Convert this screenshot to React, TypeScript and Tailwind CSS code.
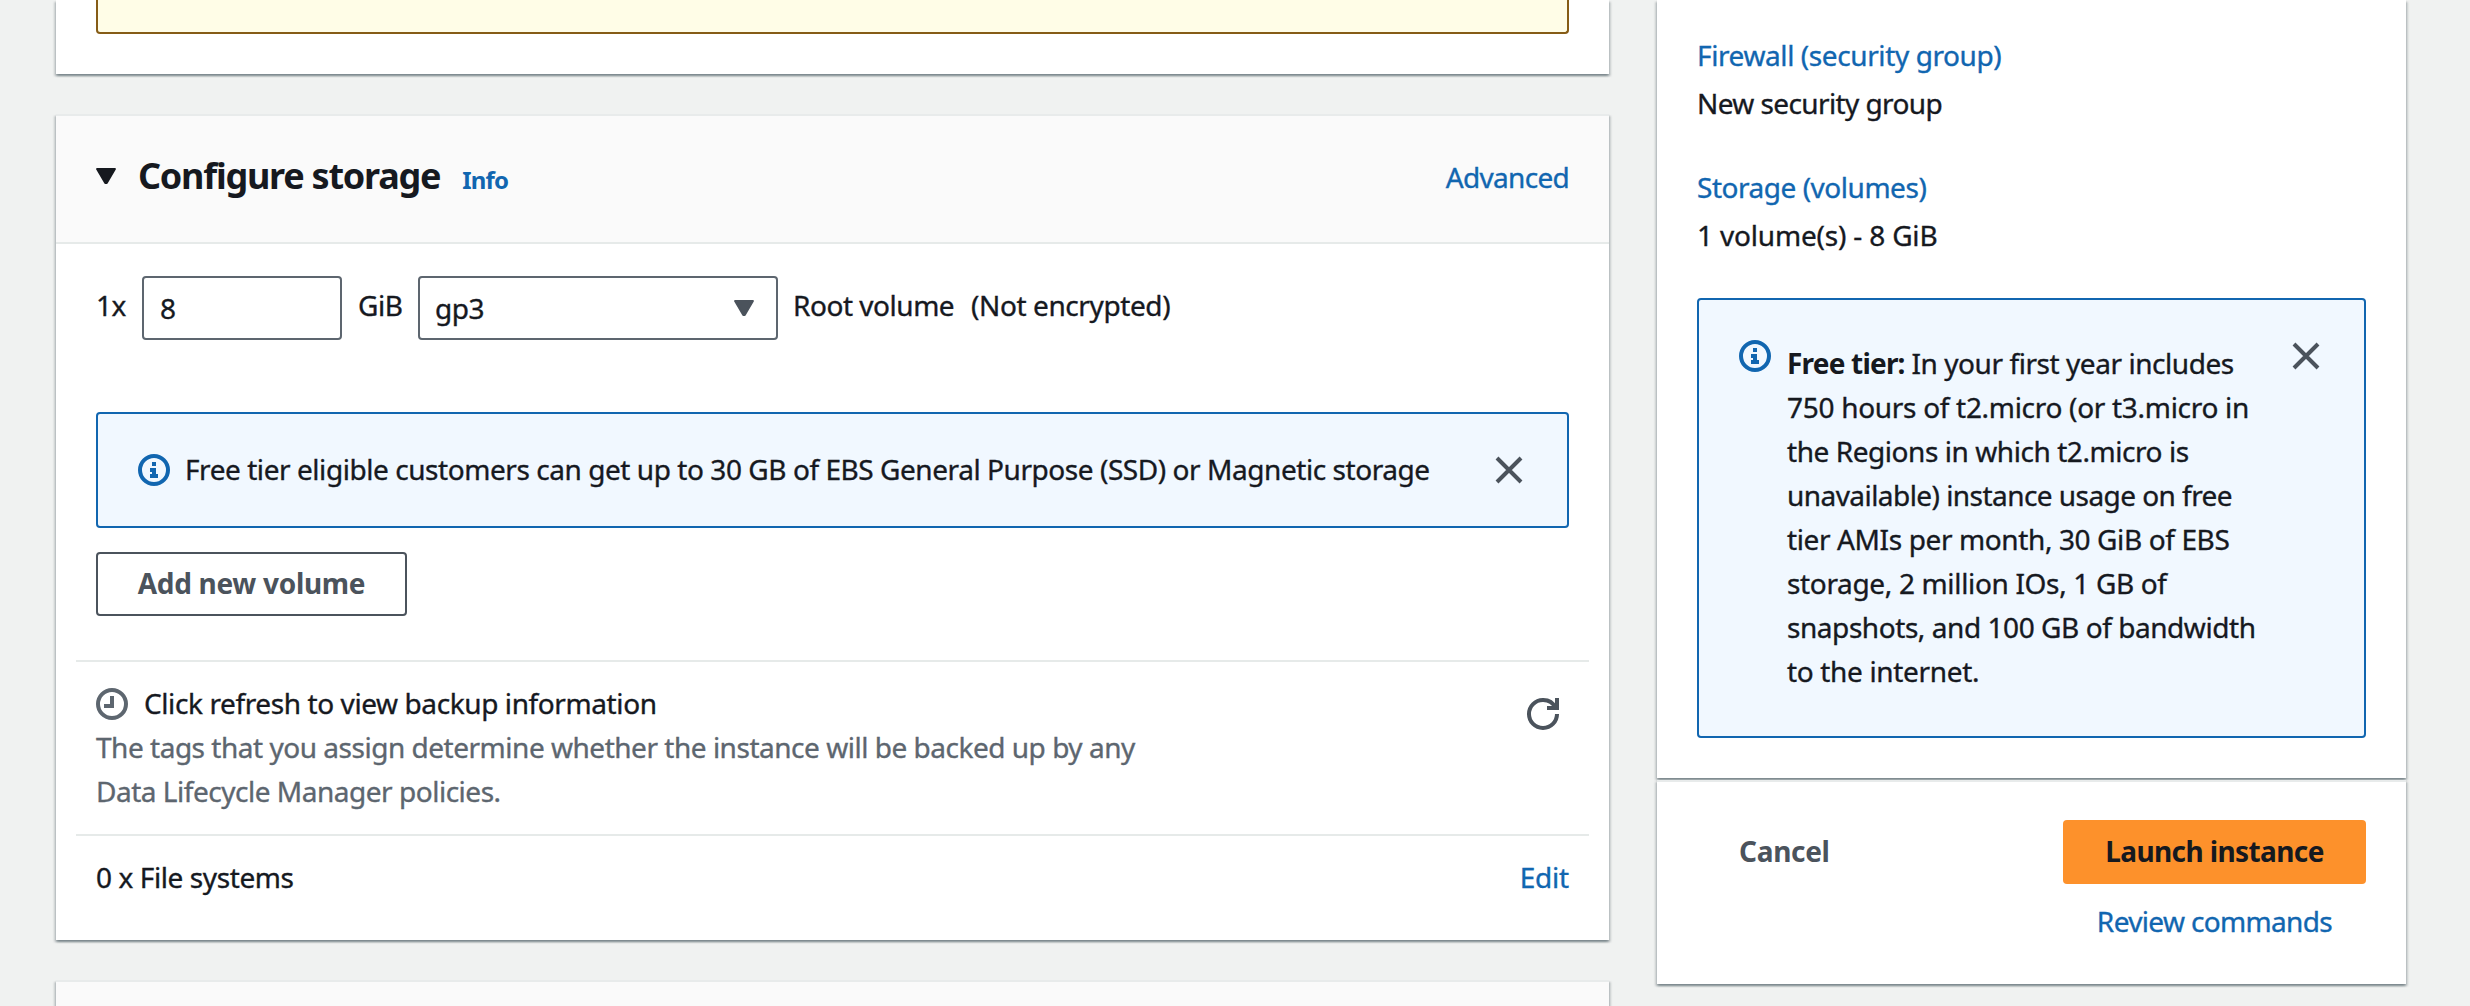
import type { ReactNode } from "react";

const CARD =
  "shadow-[0_2px_2px_0_rgba(0,28,36,0.3),2px_2px_2px_0_rgba(0,28,36,0.15),-2px_2px_2px_0_rgba(0,28,36,0.15)]";

function InfoIcon() {
  return (
    <svg viewBox="0 0 16 16" className="size-8 shrink-0 fill-none stroke-[#1166b0] stroke-2">
      <circle cx="8" cy="8" r="7" />
      <path d="M8 11V8H6M10 11H6M8 6V4" />
    </svg>
  );
}

function ClockIcon() {
  return (
    <svg viewBox="0 0 16 16" className="size-8 shrink-0 fill-none stroke-[#5d666f] stroke-2">
      <circle cx="8" cy="8" r="7" />
      <path d="M8 4v5H4" />
    </svg>
  );
}

function RefreshIcon() {
  return (
    <svg viewBox="0 0 16 16" className="size-8 shrink-0 fill-none stroke-[#4b535c] stroke-2">
      <path d="M10 5h5V0" />
      <path d="M15 8a6.957 6.957 0 0 1-7 7 6.957 6.957 0 0 1-7-7 6.957 6.957 0 0 1 7-7 6.87 6.87 0 0 1 6.3 4" />
    </svg>
  );
}

function CloseIcon() {
  return (
    <svg viewBox="0 0 16 16" className="size-8 shrink-0 fill-none stroke-[#4b535c] stroke-2">
      <path d="m2 2 12 12M14 2 2 14" />
    </svg>
  );
}

function Caret({ className }: { className: string }) {
  return (
    <svg viewBox="0 0 20 16" className={`h-4 w-5 shrink-0 ${className}`}>
      <path
        d="M1 1h18L10.8 15H9.2z"
        fill="currentColor"
        stroke="currentColor"
        strokeWidth="1.8"
        strokeLinejoin="round"
      />
    </svg>
  );
}

function Link({ children }: { children: ReactNode }) {
  return (
    <a href="#" className="whitespace-nowrap text-[#1166b0]">
      {children}
    </a>
  );
}

function StorageCard() {
  return (
    <section className={`h-[826px] shrink-0 border-t-2 border-[#e8ebeb] bg-white ${CARD}`}>
      <header className="flex h-32 items-start justify-between border-b-2 border-[#e6eae9] bg-[#fafafa] pr-10 pl-10">
        <div className="flex items-baseline pt-[34px]">
          <Caret className="mt-[18px] mr-[22px] self-start" />
          <h2 className="mr-[22px] text-[36px] leading-[52px] font-bold tracking-[-1.25px]">
            Configure storage
          </h2>
          <a href="#" className="text-[24px] font-bold tracking-[-0.8px] text-[#1166b0]">
            Info
          </a>
        </div>
        <div className="pt-[39px] tracking-[-0.7px]">
          <Link>Advanced</Link>
        </div>
      </header>

      <div className="flex h-[168px] items-start px-10 pt-8">
        <span className="w-[46px] shrink-0 pt-[7px]">1x</span>
        <div className="h-16 w-[200px] shrink-0 rounded border-2 border-[#5d666f] bg-white px-4 py-2">8</div>
        <span className="w-[76px] shrink-0 pt-[7px] pl-4">GiB</span>
        <div className="flex h-16 w-[360px] shrink-0 items-center justify-between rounded border-2 border-[#5d666f] bg-white pr-[22px] pl-[15px]">
          <span>gp3</span>
          <Caret className="text-[#4b535c]" />
        </div>
        <span className="w-[193px] shrink-0 pt-[7px] pl-[15px] whitespace-nowrap">Root volume</span>
        <span className="pt-[7px] tracking-[-0.4px] whitespace-nowrap">(Not encrypted)</span>
      </div>

      <div className="px-10">
        <div className="flex h-[116px] items-start rounded border-2 border-[#1166b0] bg-[#f1f8ff] pr-[42px] pl-10">
          <div className="pt-10">
            <InfoIcon />
          </div>
          <p className="flex-1 pt-[33px] pl-[15px] tracking-[-0.44px] whitespace-nowrap">
            Free tier eligible customers can get up to 30 GB of EBS General Purpose (SSD) or Magnetic
            storage
          </p>
          <div className="pt-10">
            <CloseIcon />
          </div>
        </div>
        <button className="mt-6 block h-16 w-[311px] rounded border-2 border-[#4b535c] bg-white pb-0.5 text-center leading-[44px] font-bold tracking-[-0.3px] text-[#4b535c]">
          Add new volume
        </button>
      </div>

      <div className="mx-5 mt-11 flex h-[174px] justify-between border-t-2 border-[#e6eae9] px-5">
        <div className="pt-[19px]">
          <div className="flex items-start">
            <div className="pt-[7px]">
              <ClockIcon />
            </div>
            <span className="pl-4 tracking-[-0.4px]">Click refresh to view backup information</span>
          </div>
          <p className="w-[1060px] tracking-[-0.48px] text-[#5d666f]">
            The tags that you assign determine whether the instance will be backed up by any
            <br />
            Data Lifecycle Manager policies.
          </p>
        </div>
        <div className="pt-9 pr-[10px]">
          <RefreshIcon />
        </div>
      </div>
      <div className="mx-5 flex justify-between border-t-2 border-[#e6eae9] px-5 pt-[19px]">
        <span className="tracking-[-0.4px]">0 x File systems</span>
        <span className="tracking-[-0.2px]">
          <Link>Edit</Link>
        </span>
      </div>
    </section>
  );
}

function SummaryCard() {
  return (
    <section className={`flex h-[778px] shrink-0 flex-col bg-white px-10 pt-[33px] ${CARD}`}>
      <span className="tracking-[-0.4px]">
        <Link>Firewall (security group)</Link>
      </span>
      <span className="mt-1 tracking-[-0.6px]">New security group</span>
      <div className="mt-10 flex flex-col">
        <Link>Storage (volumes)</Link>
        <span className="mt-1 tracking-[-0.18px]">1 volume(s) - 8 GiB</span>
      </div>
      <div className="mt-[41px] flex h-[440px] rounded border-2 border-[#1166b0] bg-[#f1f8ff] pr-[42px] pl-10">
        <div className="pt-10">
          <InfoIcon />
        </div>
        <p className="flex-1 pt-[41px] pl-4 tracking-[-0.44px] whitespace-nowrap">
          <strong className="font-bold tracking-[-0.8px]">Free tier:</strong> In your first year includes
          <br />
          <span className="tracking-[-0.3px]">750 hours of t2.micro (or t3.micro in</span>
          <br />
          the Regions in which t2.micro is
          <br />
          <span className="tracking-[-0.55px]">unavailable) instance usage on free</span>
          <br />
          <span className="tracking-[-0.38px]">tier AMIs per month, 30 GiB of EBS</span>
          <br />
          <span className="tracking-[-0.34px]">storage, 2 million IOs, 1 GB of</span>
          <br />
          snapshots, and 100 GB of bandwidth
          <br />
          <span className="tracking-[-0.34px]">to the internet.</span>
        </p>
        <div className="pt-10">
          <CloseIcon />
        </div>
      </div>
    </section>
  );
}

function ActionsCard() {
  return (
    <section
      className={`mt-0.5 flex h-[204px] shrink-0 justify-between border-t-2 border-[#e8ebeb] bg-white px-10 pt-[38px] ${CARD}`}
    >
      <button className="h-16 pb-0.5 pl-[42px] font-bold tracking-[-0.3px] text-[#4b535c]">Cancel</button>
      <div className="flex w-[303px] flex-col items-center">
        <button className="h-16 w-full rounded bg-[#fd912b] pb-0.5 font-bold tracking-[-0.6px]">
          Launch instance
        </button>
        <div className="mt-[15px] tracking-[-0.65px]">
          <Link>Review commands</Link>
        </div>
      </div>
    </section>
  );
}

export default function App() {
  return (
    <div className="flex h-[1006px] w-[2470px] overflow-hidden bg-[#f0f2f1] pl-14 font-['Noto_Sans','Open_Sans',sans-serif] text-[28px] leading-[44px] tracking-[-0.47px] text-[#16191f] [-webkit-text-stroke:0.35px] [&_.font-bold]:[-webkit-text-stroke:0]">
      <main className="flex w-[1553px] flex-col gap-10">
        <section className={`h-[74px] shrink-0 bg-white px-10 ${CARD}`}>
          <div className="h-[34px] rounded-b border-2 border-t-0 border-[#865c16] bg-[#fffde7]" />
        </section>
        <StorageCard />
        <section className={`h-20 shrink-0 border-t-2 border-[#e8ebeb] bg-[#fafafa] ${CARD}`} />
      </main>
      <aside className="ml-12 flex w-[749px] flex-col">
        <SummaryCard />
        <ActionsCard />
      </aside>
    </div>
  );
}
